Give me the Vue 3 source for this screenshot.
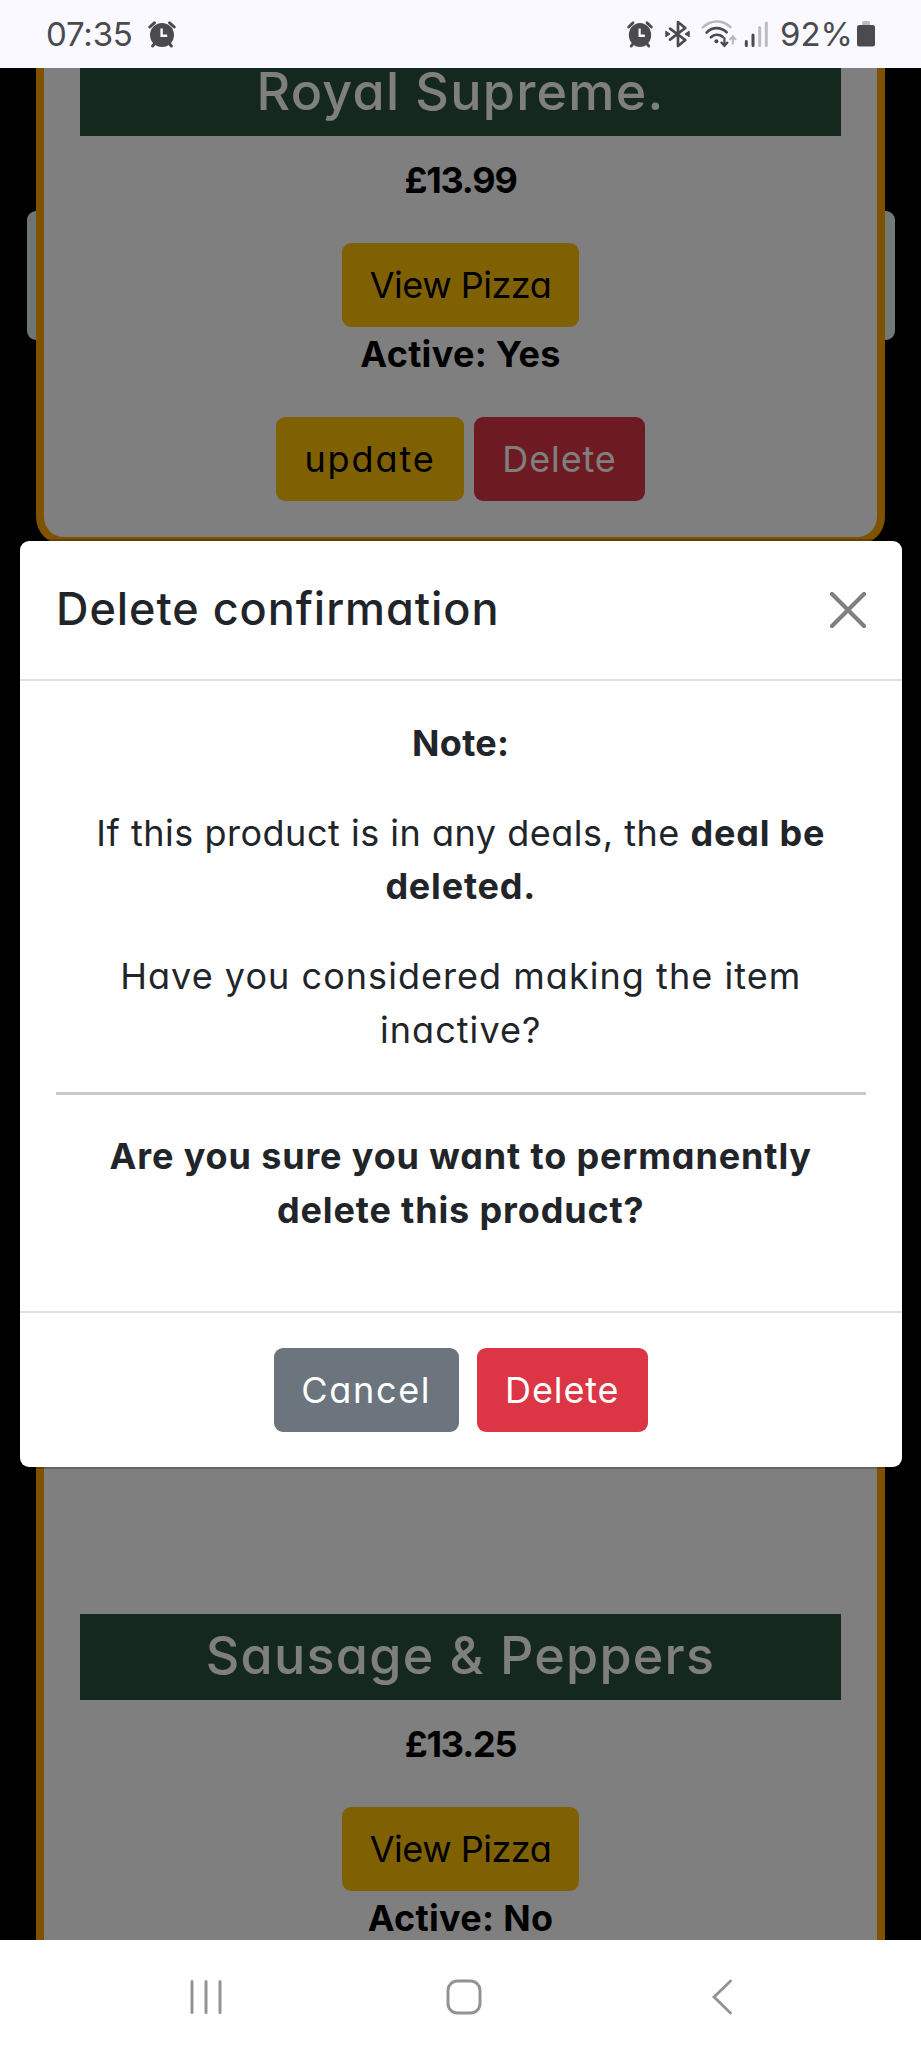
<script setup>
const confirmation = {
  title: 'Delete confirmation',
  note: 'Note:'
}
</script>

<template>
  <div class="phone">
    <header class="status">
      <span class="time">07:35</span>
      <svg class="alarm-left" width="28" height="28" viewBox="0 0 28 28">
        <circle cx="14" cy="15" r="12" fill="#4b4b4e" />
        <path d="M1.8 7 6.4 2.8M21.6 2.8l4.6 4.2M4.6 26l2.6-3M23.4 26l-2.6-3" stroke="#4b4b4e" stroke-width="3" stroke-linecap="round" />
        <path d="M13.6 8.6v7.2h5.6" fill="none" stroke="#faf9ff" stroke-width="2.4" />
      </svg>
      <div class="indicators">
        <svg width="26" height="28" viewBox="0 0 28 28" preserveAspectRatio="none">
          <circle cx="14" cy="15" r="12" fill="#4b4b4e" />
          <path d="M1.8 7 6.4 2.8M21.6 2.8l4.6 4.2M4.6 26l2.6-3M23.4 26l-2.6-3" stroke="#4b4b4e" stroke-width="3" stroke-linecap="round" />
          <path d="M13.6 8.6v7.2h5.6" fill="none" stroke="#faf9ff" stroke-width="2.4" />
        </svg>
        <svg class="bluetooth" width="25" height="28" viewBox="0 0 25 28">
          <path d="M5 8.6 20.3 20 13 26V2l7.3 6L5 19.6" fill="none" stroke="#4b4b4e" stroke-width="2.7" stroke-linejoin="round" stroke-linecap="round" />
          <path d="M.8 11.2 5 14 .8 16.8zM24.2 11.2 20 14l4.2 2.8z" fill="#4b4b4e" stroke="#4b4b4e" stroke-linejoin="round" />
        </svg>
        <svg class="wifi" width="36" height="28" viewBox="0 0 36 28">
          <g fill="none" stroke-linecap="round">
            <path d="M1.8 7.4C10-.4 21.4-.4 29.4 7" stroke="#b9b9bd" stroke-width="2.6" />
            <path d="M5.6 12.6c5.6-6 14.2-6 20-.4M10 17.2c3.2-3.2 8.2-3.2 11.6-.4" stroke="#4b4b4e" stroke-width="2.7" />
            <path d="M23.4 18v7.6m-3-3 3 3.2 3-3.2" stroke="#4b4b4e" stroke-width="2.2" />
            <path d="M31.8 23.6v-7m-2.6 2.6 2.6-2.8 2.6 2.8" stroke="#b9b9bd" stroke-width="2.1" />
          </g>
          <circle cx="15.4" cy="21.2" r="2" fill="#4b4b4e" />
        </svg>
        <svg class="signal" width="24" height="28" viewBox="0 0 24 28">
          <path d="M2.3 21.5v4M9 15v10.5" stroke="#4b4b4e" stroke-width="3" stroke-linecap="round" />
          <path d="M15.7 7.500v18M22.3 3v22.5" stroke="#bdbdc1" stroke-width="3" stroke-linecap="round" />
        </svg>
        <span class="percent">92%</span>
        <svg class="battery" width="18" height="28" viewBox="0 0 18 28">
          <rect x="5" y="1" width="8" height="5" rx="1.5" fill="#bdbdc1" />
          <rect y="5" width="18" height="21.6" rx="2.5" fill="#4b4b4e" />
        </svg>
      </div>
    </header>

    <main class="screen">
      <div class="panel"></div>
      <article class="card first">
        <h2 class="name cropped">Royal Supreme.</h2>
        <p class="price">£13.99</p>
        <button class="btn view">View Pizza</button>
        <p class="active">Active: Yes</p>
        <div class="actions">
          <button class="btn update">update</button>
          <button class="btn danger">Delete</button>
        </div>
      </article>
      <article class="card">
        <div class="photo"></div>
        <h2 class="name">Sausage &amp; Peppers</h2>
        <p class="price">£13.25</p>
        <button class="btn view">View Pizza</button>
        <p class="active">Active: No</p>
      </article>

      <div class="backdrop">
        <section class="modal">
          <div class="modal-head">
            <h1>{{ confirmation.title }}</h1>
            <svg width="36" height="36" viewBox="0 0 36 36">
              <path d="M2 2l32 32M34 2 2 34" stroke="#7f7f7f" stroke-width="4.2" stroke-linecap="round" />
            </svg>
          </div>
          <div class="modal-body">
            <p><b class="note">{{ confirmation.note }}</b></p>
            <p class="deals">If this product is in any deals, the <b>deal be<br />deleted.</b></p>
            <p class="consider">Have you considered making the item<br />inactive?</p>
            <hr />
            <p class="sure"><b>Are you sure you want to permanently<br />delete this product?</b></p>
          </div>
          <div class="modal-foot">
            <button class="btn cancel">Cancel</button>
            <button class="btn danger">Delete</button>
          </div>
        </section>
      </div>
    </main>

    <nav class="navbar">
      <svg width="32" height="38" viewBox="0 0 32 38">
        <path d="M2 3.5v31M16 3.5v31M30 3.5v31" stroke="#939393" stroke-width="3" stroke-linecap="round" />
      </svg>
      <svg class="home" width="38" height="38" viewBox="0 0 38 38">
        <rect x="3" y="3" width="32" height="32" rx="9.5" fill="none" stroke="#939393" stroke-width="3" />
      </svg>
      <svg class="back" width="22" height="38" viewBox="0 0 22 38">
        <path d="M19.5 3 3 19l16.5 16" fill="none" stroke="#939393" stroke-width="2.8" stroke-linecap="round" />
      </svg>
    </nav>
  </div>
</template>

<style>
html, body { margin: 0; background: #000; }
</style>

<style scoped>
.phone {
  width: 921px;
  height: 2048px;
  display: flex;
  flex-direction: column;
  overflow: hidden;
  background: #000;
  font-family: Inter, "Open Sans", sans-serif;
  font-feature-settings: "cv11";
  font-size: 36px;
}
svg { display: block; flex: none; }
.status {
  height: 68px;
  flex: none;
  display: flex;
  align-items: center;
  box-sizing: border-box;
  padding: 0 46px 0 46px;
  background: #faf9ff;
  color: #4b4b4e;
  font-size: 33px;
  line-height: 40px;
}
.time { width: 88px; letter-spacing: -0.2px; }
.alarm-left { margin-left: 14px; }
.indicators { display: flex; align-items: center; margin-left: auto; }
.bluetooth { margin-left: 12px; }
.wifi { margin-left: 11px; }
.signal { margin-left: 7px; }
.percent { width: 72px; margin-left: 12px; white-space: nowrap; }
.battery { margin-left: 5px; }

.screen { position: relative; flex: 1; min-height: 0; overflow: hidden; }
.panel {
  position: absolute;
  left: 27px;
  top: 143px;
  width: 868px;
  height: 129px;
  border-radius: 9px;
  background: linear-gradient(90deg, #dceae7, #e2f4ea);
}
.card {
  position: relative;
  margin: 36px 36px 0;
  padding: 0 36px 36px;
  border: 8px solid #ffa500;
  border-radius: 28px;
  background: #fff;
  color: #000;
  display: flex;
  flex-direction: column;
  align-items: center;
}
.card.first { margin-top: 0; border-top: 0; border-radius: 0 0 28px 28px; }
.photo { height: 1025px; }
.name {
  width: 100%;
  height: 86px;
  margin: 0 0 17px;
  background: #28503c;
  color: #fff;
  text-align: center;
  font-size: 52px;
  font-weight: 500;
  line-height: 84px;
  letter-spacing: 1.25px;
}
/* The heading is scrolled partly under the status bar. */
.name.cropped { height: 68px; line-height: 48px; }
.price, .active { margin: 0; font-weight: 700; line-height: 54px; }
.price { margin-bottom: 36px; letter-spacing: -1.2px; }
.active { letter-spacing: 0.3px; }
.actions { display: flex; gap: 10px; margin-top: 36px; }
.btn {
  height: 84px;
  padding: 0;
  border: 0;
  border-radius: 9px;
  font: inherit;
  line-height: 83px;
  text-align: center;
  font-feature-settings: inherit;
}
.view { width: 237px; background: #ffc107; color: #000; letter-spacing: -0.5px; }
.update { width: 188px; background: #ffc107; color: #000; letter-spacing: 1.9px; }
.danger { width: 171px; background: #dc3545; color: #fff; letter-spacing: 0.9px; }
.cancel { width: 185px; background: #6c757d; color: #fff; letter-spacing: 1.7px; }

.backdrop { position: absolute; inset: 0; background: rgba(0, 0, 0, 0.5); }
.modal {
  position: absolute;
  left: 20px;
  top: 473px;
  width: 881.5px;
  height: 926px;
  display: flex;
  flex-direction: column;
  border-radius: 9px;
  background: #fff;
  box-shadow: 0 0 0 2px rgba(0, 0, 0, 0.2);
  color: #212529;
}
.modal-head {
  height: 138px;
  display: flex;
  align-items: center;
  justify-content: space-between;
  padding: 0 36px;
  border-bottom: 2px solid #e0e0e0;
}
.modal-head h1 {
  margin: 0;
  padding-bottom: 3px;
  font-size: 45px;
  font-weight: 500;
  line-height: 68px;
  letter-spacing: 0.95px;
}
.modal-body {
  flex: 1;
  padding: 36px 36px 0;
  text-align: center;
  line-height: 53.8px;
  white-space: nowrap;
}
.modal-body p { margin: 0 0 35.8px; }
.modal-body hr { height: 3px; margin: -1px 0 35px; border: 0; background: #c8c8c8; }
.note { letter-spacing: 0.3px; }
.deals { letter-spacing: 0.52px; }
.deals b { letter-spacing: 0.8px; }
.consider { letter-spacing: 1.04px; }
.sure { letter-spacing: 0.86px; }
.modal-foot {
  display: flex;
  justify-content: center;
  gap: 18px;
  padding: 35px 0;
  border-top: 2px solid #e0e0e0;
}

.navbar {
  height: 108px;
  flex: none;
  display: flex;
  align-items: center;
  box-sizing: border-box;
  padding: 5px 0 0 190px;
  background: #fff;
}
.home { margin-left: 223px; }
.back { margin-left: 228px; }
</style>
